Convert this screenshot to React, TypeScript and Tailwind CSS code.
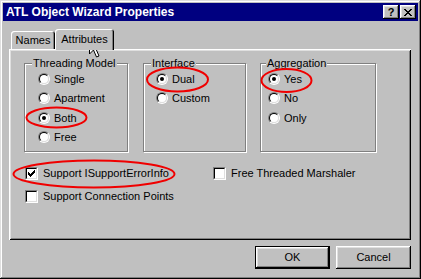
import type { ReactNode } from "react";

const bevel =
  "shadow-[inset_-1px_-1px_#000,inset_1px_1px_#fff,inset_-2px_-2px_#808080,inset_2px_2px_#dfdfdf]";

function Radio({ label, checked }: { label: string; checked?: boolean }) {
  return (
    <div className="flex h-[19.5px] items-center gap-[4px]">
      <span className="flex h-[12px] w-[12px] shrink-0 rounded-full border border-t-[#808080] border-l-[#808080] border-r-white border-b-white">
        <span className="flex flex-1 items-center justify-center rounded-full border border-t-black border-l-black border-r-[#dfdfdf] border-b-[#dfdfdf] bg-white">
          {checked && <span className="h-[4px] w-[4px] rounded-full bg-black" />}
        </span>
      </span>
      <span>{label}</span>
    </div>
  );
}

const checkPixels = [
  [6, 0, 1], [5, 1, 2], [0, 2, 1], [4, 2, 3], [0, 3, 2], [3, 3, 3], [0, 4, 5], [1, 5, 3], [2, 6, 1],
];

function Check({ label, checked, className = "" }: { label: string; checked?: boolean; className?: string }) {
  return (
    <div className={`flex h-[13px] items-center gap-[5px] ${className}`}>
      <span className="flex h-[13px] w-[13px] shrink-0 border border-t-[#808080] border-l-[#808080] border-r-white border-b-white">
        <span className="flex flex-1 items-center justify-center border border-t-black border-l-black border-r-[#dfdfdf] border-b-[#dfdfdf] bg-white">
          {checked && (
            <svg width="7" height="7" viewBox="0 0 7 7" shapeRendering="crispEdges">
              {checkPixels.map(([x, y, w]) => (
                <rect key={`${x}-${y}`} x={x} y={y} width={w} height={1} fill="#000" />
              ))}
            </svg>
          )}
        </span>
      </span>
      <span>{label}</span>
    </div>
  );
}

function Group({
  title,
  className,
  labelClass,
  bodyClass,
  children,
}: {
  title: string;
  className: string;
  labelClass: string;
  bodyClass: string;
  children: ReactNode;
}) {
  return (
    <div className={`h-[89px] border border-[#808080] shadow-[1px_1px_0_#fff,inset_1px_1px_0_#fff] ${className}`}>
      <div className={`-mt-[7px] w-fit bg-[#c0c0c0] px-[1px] leading-[13px] ${labelClass}`}>{title}</div>
      <div className={`-mt-[1px] flex flex-col ${bodyClass}`}>{children}</div>
    </div>
  );
}

function Overlay() {
  return (
    <svg className="pointer-events-none absolute left-0 top-0" width="421" height="279" viewBox="0 0 421 279">
      <g fill="none" stroke="#f00000" strokeWidth="2">
        <ellipse cx="56.5" cy="117.5" rx="30" ry="10" />
        <ellipse cx="177.5" cy="79.5" rx="30.5" ry="12" />
        <ellipse cx="286.5" cy="80.5" rx="25" ry="11.5" />
        <ellipse cx="94" cy="174" rx="80.5" ry="13.5" />
      </g>
      <polygon
        points="89.5,37.5 89.5,54 93.5,50 96.5,57 99,56 96,49 101,49"
        fill="#fff"
        stroke="#000"
        strokeWidth="1"
        strokeLinejoin="miter"
      />
    </svg>
  );
}

export default function App() {
  return (
    <div
      className={`relative flex h-[279px] w-[421px] flex-col bg-[#c0c0c0] p-[3px] font-['Liberation_Sans',Arial,sans-serif] text-[11px] text-black shadow-[inset_-1px_-1px_#000,inset_1px_1px_#dfdfdf,inset_-2px_-2px_#808080,inset_2px_2px_#fff]`}
    >
      {/* caption */}
      <div className="flex h-[18px] items-center bg-[#000080] pl-[3px] pr-[2px]">
        <span className="flex-1 text-[12px] font-bold leading-none text-white">ATL Object Wizard Properties</span>
        <span className={`flex h-[14px] w-[16px] items-center justify-center bg-[#c0c0c0] text-[11px] font-bold leading-none ${bevel}`}>
          ?
        </span>
        <span className={`ml-[1px] flex h-[14px] w-[16px] items-center justify-center bg-[#c0c0c0] ${bevel}`}>
          <svg width="8" height="7" viewBox="0 0 8 7" shapeRendering="crispEdges">
            <path d="M0 0h2v1h-2zM6 0h2v1h-2zM1 1h2v1h-2zM5 1h2v1h-2zM2 2h4v1h-4zM3 3h2v1h-2zM2 4h4v1h-4zM1 5h2v1h-2zM5 5h2v1h-2zM0 6h2v1h-2zM6 6h2v1h-2z" fill="#000" />
          </svg>
        </span>
      </div>

      <div className="flex flex-col px-[6px] pt-[8px]">
        {/* tabs */}
        <div className="flex h-[20px] items-end pl-[2px]">
          <div className="flex h-[18px] w-[44px] items-center justify-center rounded-t-[3px] shadow-[inset_1px_1px_#fff,inset_-1px_0_#000,inset_-2px_0_#808080]">
            Names
          </div>
          <div className="relative z-[1] -mb-[1px] flex h-[21px] w-[59px] items-center justify-center rounded-t-[3px] bg-[#c0c0c0] pb-[1px] shadow-[inset_1px_1px_#fff,inset_-1px_0_#000,inset_-2px_0_#808080]">
            Attributes
          </div>
        </div>

        {/* panel */}
        <div className="flex h-[191px] w-[402px] flex-col pl-[15px] pt-[14px] shadow-[inset_1px_1px_#fff,inset_-1px_-1px_#000,inset_2px_2px_#dfdfdf,inset_-2px_-2px_#808080]">
          <div className="flex items-start">
            <Group title="Threading Model" className="w-[104px]" labelClass="ml-[7px]" bodyClass="pl-[13px]">
              <Radio label="Single" />
              <Radio label="Apartment" />
              <Radio label="Both" checked />
              <Radio label="Free" />
            </Group>
            <Group title="Interface" className="ml-[15px] w-[103px]" labelClass="ml-[7px]" bodyClass="pl-[12px]">
              <Radio label="Dual" checked />
              <Radio label="Custom" />
            </Group>
            <Group title="Aggregation" className="ml-[14px] w-[116px]" labelClass="ml-[5px]" bodyClass="pl-[7px]">
              <Radio label="Yes" checked />
              <Radio label="No" />
              <Radio label="Only" />
            </Group>
          </div>

          <div className="ml-[1px] mt-[15px] flex flex-col gap-[10px]">
            <div className="flex">
              <Check label="Support ISupportErrorInfo" checked className="w-[188px]" />
              <Check label="Free Threaded Marshaler" />
            </div>
            <Check label="Support Connection Points" />
          </div>
        </div>

        {/* buttons */}
        <div className="mt-[6px] flex w-[402px] justify-end gap-[6px]">
          <div className="flex h-[23px] w-[75px] border border-black">
            <div className={`flex flex-1 items-center justify-center ${bevel}`}>OK</div>
          </div>
          <div className={`flex h-[23px] w-[75px] items-center justify-center ${bevel}`}>Cancel</div>
        </div>
      </div>

      <Overlay />
    </div>
  );
}
